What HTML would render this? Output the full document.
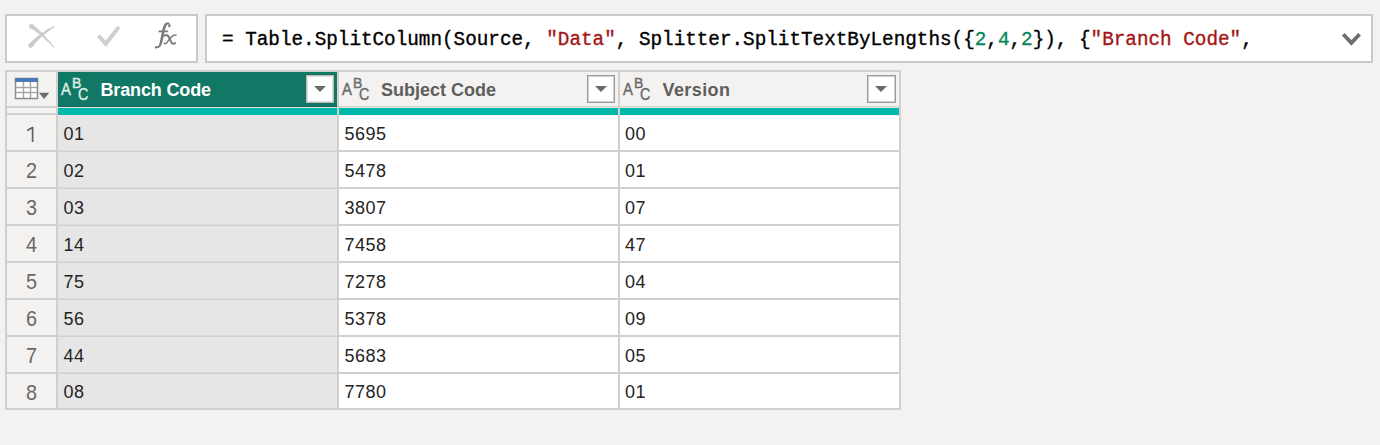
<!DOCTYPE html>
<html><head><meta charset="utf-8">
<style>
html,body{margin:0;padding:0;}
body{width:1380px;height:445px;background:#f3f2f1;position:relative;overflow:hidden;font-family:"Liberation Sans",sans-serif;}
.abs{position:absolute;}
.box{position:absolute;background:#fff;border:2px solid #cbc9c7;box-sizing:border-box;}
.code{position:absolute;left:222px;top:28px;font-family:"Liberation Mono",monospace;font-size:19.31px;line-height:24px;white-space:pre;color:#000;-webkit-text-stroke:0.35px currentColor;}
.s{color:#a31515}.n{color:#098658}
.tbl{position:absolute;left:5px;top:70px;width:896px;height:340px;box-sizing:border-box;border:2px solid #d2d0ce;background:#fff;}
.vl{position:absolute;width:2px;background:#d2d0ce;}
.hl{position:absolute;height:2px;background:#d0d0d0;}
.hdr{position:absolute;top:72px;height:34px;background:#f3f2f1;}
.hdr.sel{background:#117865;}
.teal{position:absolute;top:108px;height:7px;background:#01b8aa;}
.ht{position:absolute;top:78px;font-weight:bold;font-size:18px;line-height:24px;color:#605e5c;white-space:pre;}
.sel .ht{color:#fff;}
.dd{position:absolute;top:75px;width:28px;height:28px;box-sizing:border-box;border:1px solid #999;box-shadow:inset 0 0 0 1px #d2d2d2;background:#fff;}
.dd:after{content:"";position:absolute;left:7px;top:10px;border-left:6px solid transparent;border-right:6px solid transparent;border-top:6px solid #6b6b6b;}
.cell{position:absolute;font-size:18px;line-height:24px;color:#252423;white-space:pre;letter-spacing:0.5px;}
.abc{position:absolute;top:0;}
.abc span{position:absolute;font-size:16.5px;line-height:16px;-webkit-text-stroke:0.45px currentColor;transform:scaleX(0.9);transform-origin:0 0;}
.rn{position:absolute;left:7px;width:49px;text-align:center;font-size:22px;line-height:24px;color:#6a6866;transform:scaleX(0.9);transform-origin:24.5px 0;}
</style></head><body>
<div class="box" style="left:5px;top:14px;width:193px;height:49px;"></div>
<div class="box" style="left:205px;top:14px;width:1168px;height:49px;"></div>
<div class="code">= Table.SplitColumn(Source, <span class="s">"Data"</span>, Splitter.SplitTextByLengths({<span class="n">2</span>,<span class="n">4</span>,<span class="n">2</span>}), {<span class="s">"Branch Code"</span>,</div>


<svg class="abs" style="left:0;top:0;" width="200" height="64" viewBox="0 0 200 64">
<g fill="#cccccc">
<path d="M30.12 28.17 L31.03 28.61 L32.03 29.16 L33.11 29.82 L34.28 30.58 L35.52 31.45 L36.83 32.42 L38.22 33.50 L39.67 34.68 L41.20 35.96 L42.80 37.34 L44.47 38.82 L46.21 40.40 L48.01 42.09 L49.88 43.87 L51.82 45.76 L53.83 47.74 L54.57 47.06 L52.72 44.92 L50.93 42.87 L49.21 40.92 L47.56 39.07 L45.97 37.31 L44.44 35.65 L42.98 34.09 L41.58 32.62 L40.24 31.25 L38.96 29.97 L37.74 28.78 L36.59 27.69 L35.48 26.69 L34.44 25.78 L33.44 24.96 L32.48 24.23 Z"/>
<path d="M32.35 47.09 L33.49 45.63 L34.67 44.20 L35.88 42.79 L37.13 41.41 L38.41 40.05 L39.73 38.72 L41.08 37.42 L42.47 36.15 L43.90 34.91 L45.36 33.69 L46.86 32.50 L48.40 31.34 L49.97 30.20 L51.58 29.10 L53.23 28.02 L54.91 26.97 L54.29 25.83 L52.48 26.71 L50.70 27.63 L48.95 28.58 L47.23 29.56 L45.53 30.58 L43.87 31.64 L42.23 32.72 L40.63 33.85 L39.05 35.01 L37.50 36.20 L35.99 37.43 L34.50 38.69 L33.04 39.99 L31.61 41.33 L30.22 42.70 L28.85 44.11 Z"/>
<circle cx="31.3" cy="26.2" r="2.3"/><circle cx="30.6" cy="45.6" r="2.3"/>
</g>
<polyline points="98.4,35.5 105.8,43.9 118.9,26.9" fill="none" stroke="#cfcfcf" stroke-width="4"/>
</svg>
<svg class="abs" style="left:140px;top:14px;" width="50" height="40" viewBox="140 14 50 40">
<g fill="none" stroke="#7a7a7a" stroke-linecap="round">
<path d="M170.20 25.81 L170.20 25.24 L170.12 24.67 L169.99 24.12 L169.75 23.63 L169.40 23.19 L168.95 22.85 L168.44 22.60 L167.88 22.47 L167.29 22.44 L166.69 22.51 L166.09 22.70 L165.37 23.10 L164.55 23.98 L163.86 25.12 L163.28 26.45 L162.77 27.95 L162.32 29.59 L161.91 31.33 L161.53 33.16 L161.17 35.02 L160.83 36.88 L160.49 38.71 L160.16 40.46 L159.81 42.10 L159.60 43.00 L159.38 43.79 L159.13 44.47 L158.87 45.07 L158.60 45.56 L158.31 45.97 L158.01 46.30 L157.68 46.57 L157.32 46.77 L156.91 46.90 L156.45 46.91 L155.90 46.81 L155.70 47.99 L156.33 48.10 L156.99 48.13 L157.65 48.10 L158.30 47.95 L158.94 47.68 L159.54 47.28 L160.10 46.77 L160.61 46.15 L161.07 45.43 L161.49 44.62 L161.86 43.70 L162.19 42.70 L162.62 41.01 L163.03 39.23 L163.42 37.39 L163.79 35.53 L164.17 33.69 L164.54 31.92 L164.93 30.24 L165.33 28.71 L165.75 27.36 L166.19 26.25 L166.62 25.43 L167.03 24.90 L167.13 24.83 L167.36 24.68 L167.58 24.58 L167.79 24.51 L168.00 24.48 L168.20 24.48 L168.39 24.51 L168.58 24.60 L168.77 24.75 L168.94 24.99 L169.01 25.33 L169.00 25.79 Z" fill="#7a7a7a" stroke="none"/><circle cx="169.4" cy="25.9" r="1.25" fill="#7a7a7a" stroke="none"/><circle cx="156.2" cy="47.3" r="1.3" fill="#7a7a7a" stroke="none"/>
<path d="M159.3 31.4 L167.4 31.4" stroke-width="1.7"/>
<path d="M164.6 35.6 C166.6 34.4 168.2 35.4 169.6 38.6 L171.4 42.4 C172.4 44.2 173.6 44.2 175.2 43" stroke-width="2"/>
<path d="M176 35.2 C174.2 34.4 172.2 35.8 169.8 38.8 L167.2 42.2 C166.2 43.8 164.8 44.2 164.2 43.2" stroke-width="1.4"/>
</g>
</svg>
<svg class="abs" style="left:1330px;top:20px;" width="40" height="36" viewBox="1330 20 40 36">
<polyline points="1343.2,34.3 1351.4,42.9 1359.6,34.3" fill="none" stroke="#707070" stroke-width="3.8"/>
</svg>

<div class="tbl"></div>
<!-- corner -->
<div class="abs" style="left:7px;top:72px;width:49px;height:336px;background:#f3f2f1;"></div>
<!-- headers -->
<div class="abs" style="left:58px;top:106px;width:841px;height:1px;background:#d6d2d0;"></div>
<div class="abs" style="left:58px;top:107px;width:841px;height:1px;background:#ebe4e3;"></div>
<div class="hdr sel" style="left:58px;width:279px;height:35px;box-shadow:inset 0 -1px 0 #0f705f;"></div>
<div class="hdr" style="left:339px;width:279px;"></div>
<div class="hdr" style="left:620px;width:279px;"></div>
<div class="teal" style="left:58px;width:279px;"></div>
<div class="teal" style="left:339px;width:279px;"></div>
<div class="teal" style="left:620px;width:279px;"></div>
<!-- col bg -->
<div class="abs" style="left:58px;top:115px;width:279px;height:293px;background:#e6e6e6;"></div>
<div class="abs" style="left:58px;top:115px;width:279px;height:1px;background:#ece6e6;"></div>
<div class="abs" style="left:339px;top:115px;width:560px;height:1px;background:#f6f0f0;"></div>
<!-- vertical lines -->
<div class="vl" style="left:56px;top:72px;height:336px;"></div>
<div class="vl" style="left:337px;top:72px;height:336px;"></div>
<div class="vl" style="left:618px;top:72px;height:336px;"></div>
<!-- header bottom lines -->
<div class="hl" style="left:7px;top:106px;width:49px;"></div>
<div class="hl" style="left:7px;top:113px;width:49px;"></div>
<div class="hl" style="left:7px;top:150px;width:892px;"></div>
<div class="hl" style="left:7px;top:187px;width:892px;"></div>
<div class="hl" style="left:7px;top:224px;width:892px;"></div>
<div class="hl" style="left:7px;top:261px;width:892px;"></div>
<div class="hl" style="left:7px;top:298px;width:892px;"></div>
<div class="hl" style="left:7px;top:335px;width:892px;"></div>
<div class="hl" style="left:7px;top:372px;width:892px;"></div>

<div class="abs" style="left:58px;top:150px;width:279px;height:1px;background:#dcdcdc;"></div><div class="abs" style="left:58px;top:187px;width:279px;height:1px;background:#dcdcdc;"></div><div class="abs" style="left:58px;top:224px;width:279px;height:1px;background:#dcdcdc;"></div><div class="abs" style="left:58px;top:261px;width:279px;height:1px;background:#dcdcdc;"></div><div class="abs" style="left:58px;top:298px;width:279px;height:1px;background:#dcdcdc;"></div><div class="abs" style="left:58px;top:335px;width:279px;height:1px;background:#dcdcdc;"></div><div class="abs" style="left:58px;top:372px;width:279px;height:1px;background:#dcdcdc;"></div>
<div class="ht" style="left:100.5px;color:#fff;letter-spacing:-0.15px;">Branch Code</div>
<div class="ht" style="left:381px;">Subject Code</div>
<div class="ht" style="left:662.5px;letter-spacing:0.4px;">Version</div>
<div class="dd" style="left:306px;border-color:#c2b6b6;box-shadow:inset 0 0 0 1px #e3dede;"></div>
<div class="dd" style="left:587px;"></div>
<div class="dd" style="left:867px;width:29px;box-shadow:inset 0 0 0 1px #d2d2d2, inset -1px 0 0 #a8a8a8;"></div>

<svg class="abs" style="left:0;top:70px;" width="56" height="36" viewBox="0 70 56 36">
<rect x="15" y="78" width="23" height="21" fill="#fff"/>
<rect x="15" y="78" width="23" height="4" fill="#4a7ab8"/>
<rect x="15.5" y="78.5" width="22" height="20" fill="none" stroke="#8c8c8c" stroke-width="1.5"/>
<rect x="15" y="78" width="23" height="4" fill="#4a7ab8"/>
<line x1="23.5" y1="82" x2="23.5" y2="98" stroke="#a4a4a4" stroke-width="1.4"/>
<line x1="30.5" y1="82" x2="30.5" y2="98" stroke="#a4a4a4" stroke-width="1.4"/>
<line x1="16" y1="87.5" x2="37" y2="87.5" stroke="#a4a4a4" stroke-width="1.4"/>
<line x1="16" y1="92.5" x2="37" y2="92.5" stroke="#a4a4a4" stroke-width="1.4"/>
<polygon points="39,92.8 49.2,92.8 44.1,99" fill="#6b6b6b"/>
</svg><div class="abc" style="left:58px;color:#dcede7"><span style="left:3.2px;top:80.5px">A</span><span style="left:13.9px;top:75.4px;font-size:15.5px;">B</span><span style="left:19.8px;top:86.3px;transform:scaleX(0.86);">C</span></div><div class="abc" style="left:339px;color:#6a6a6a"><span style="left:3.2px;top:80.5px">A</span><span style="left:13.9px;top:75.4px;font-size:15.5px;">B</span><span style="left:19.8px;top:86.3px;transform:scaleX(0.86);">C</span></div><div class="abc" style="left:620px;color:#6a6a6a"><span style="left:3.2px;top:80.5px">A</span><span style="left:13.9px;top:75.4px;font-size:15.5px;">B</span><span style="left:19.8px;top:86.3px;transform:scaleX(0.86);">C</span></div>
<svg class="abs" style="left:20px;top:120px;" width="24" height="26" viewBox="20 120 24 26"><g fill="none" stroke="#62605e" stroke-width="1.7"><line x1="32.6" y1="127" x2="32.6" y2="142"/><line x1="27.3" y1="130.6" x2="33" y2="127.3"/></g></svg>
<div class="rn" style="top:158.5px;">2</div>
<div class="rn" style="top:195.5px;">3</div>
<div class="rn" style="top:232.5px;">4</div>
<div class="rn" style="top:269.5px;">5</div>
<div class="rn" style="top:306.5px;">6</div>
<div class="rn" style="top:343.5px;">7</div>
<div class="rn" style="top:380.5px;">8</div>

<div class="cell" style="left:63.5px;top:122px">01</div><div class="cell" style="left:344.5px;top:122px">5695</div><div class="cell" style="left:625px;top:122px">00</div>
<div class="cell" style="left:63.5px;top:159px">02</div><div class="cell" style="left:344.5px;top:159px">5478</div><div class="cell" style="left:625px;top:159px">01</div>
<div class="cell" style="left:63.5px;top:196px">03</div><div class="cell" style="left:344.5px;top:196px">3807</div><div class="cell" style="left:625px;top:196px">07</div>
<div class="cell" style="left:63.5px;top:233px">14</div><div class="cell" style="left:344.5px;top:233px">7458</div><div class="cell" style="left:625px;top:233px">47</div>
<div class="cell" style="left:63.5px;top:270px">75</div><div class="cell" style="left:344.5px;top:270px">7278</div><div class="cell" style="left:625px;top:270px">04</div>
<div class="cell" style="left:63.5px;top:307px">56</div><div class="cell" style="left:344.5px;top:307px">5378</div><div class="cell" style="left:625px;top:307px">09</div>
<div class="cell" style="left:63.5px;top:343.5px">44</div><div class="cell" style="left:344.5px;top:343.5px">5683</div><div class="cell" style="left:625px;top:343.5px">05</div>
<div class="cell" style="left:63.5px;top:380px">08</div><div class="cell" style="left:344.5px;top:380px">7780</div><div class="cell" style="left:625px;top:380px">01</div>
</body></html>
